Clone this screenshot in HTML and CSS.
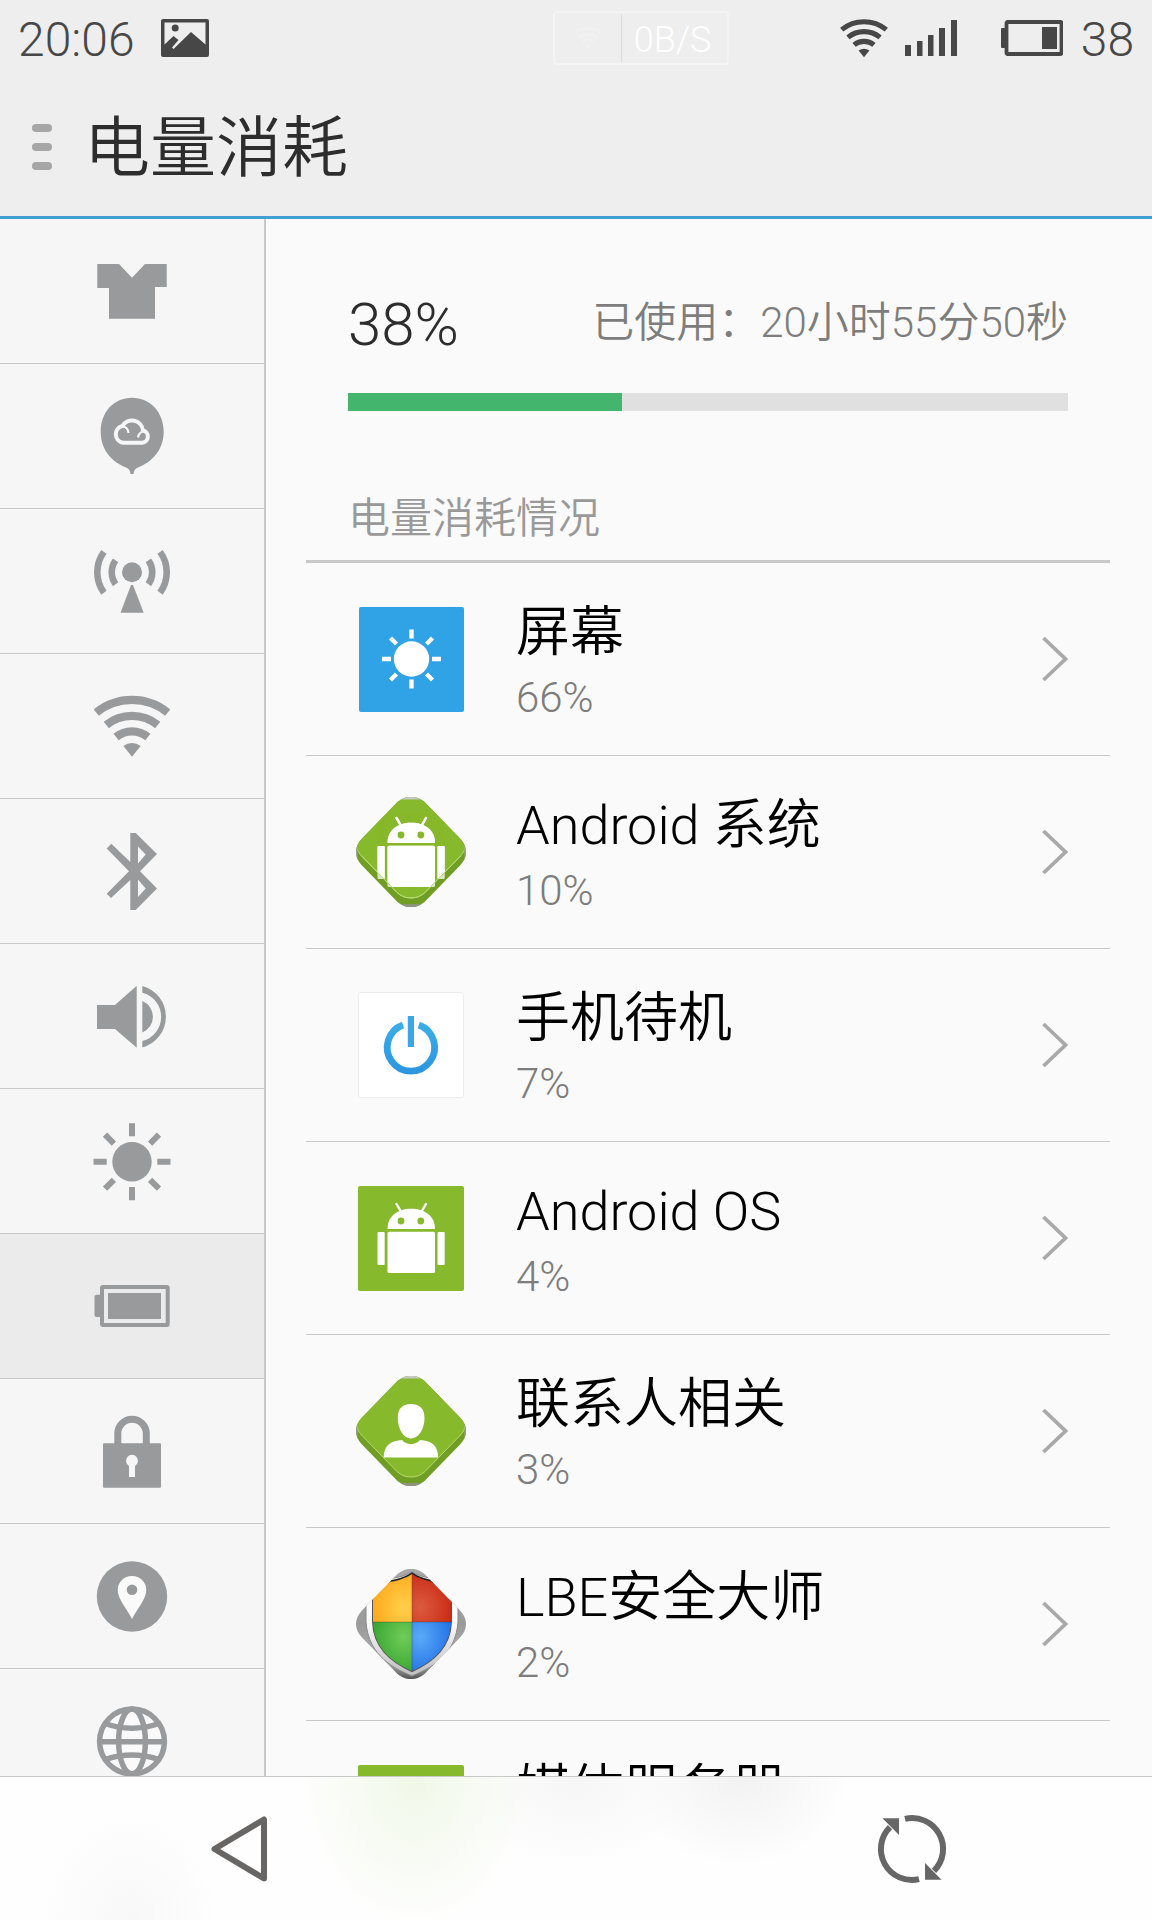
FILE: index.html
```html
<!DOCTYPE html>
<html lang="zh-CN">
<head>
<meta charset="utf-8">
<meta name="viewport" content="width=device-width, initial-scale=1">
<title>电量消耗</title>
<link rel="stylesheet" href="styles.css">
</head>
<body>
<svg class="defs" width="0" height="0" aria-hidden="true">
  <defs>
    <symbol id="wifi" viewBox="0 0 80 80">
      <g fill="none" stroke="currentColor" stroke-width="8.2">
        <path d="M4.3 26.6A56.7 56.7 0 0 1 75.7 26.6"/>
        <path d="M14.3 39A40.8 40.8 0 0 1 65.7 39"/>
        <path d="M24.1 51A25.3 25.3 0 0 1 55.9 51"/>
      </g>
      <path fill="currentColor" d="M31.4 60.1A13.7 13.7 0 0 1 48.6 60.1L40 70.7Z"/>
    </symbol>
    <symbol id="robot" viewBox="0 0 110 110">
      <g fill="#fff">
        <path d="M31.5 46C31.5 33.5 41 25.7 55.2 25.7C69.500 25.700 79 33.500 79 46Z"/>
        <path d="M40.500 21L45.500 29.500M70 21L65 29.500" stroke="#fff" stroke-width="2.400" stroke-linecap="round"/>
        <rect x="31.500" y="48.700" width="47.500" height="41.300" rx="1.500"/>
        <rect x="21.500" y="49" width="7.200" height="33" rx="1"/>
        <rect x="81.500" y="49" width="7.200" height="33" rx="1"/>
      </g>
      <circle cx="45" cy="38" r="3.400" fill="#86b92b"/>
      <circle cx="64.800" cy="38" r="3.400" fill="#86b92b"/>
    </symbol>
    <path id="diamond" d="M55 0C61 0 65 2 69 5.500L104.500 42C108 46 110 50 110 55C110 60 108 64 104.500 68L69 104.500C65 108 61 110 55 110C49 110 45 108 41 104.500L5.500 68C2 64 0 60 0 55C0 50 2 46 5.500 42L41 5.500C45 2 49 0 55 0Z"/>
    <clipPath id="diamond-clip"><use href="#diamond"/></clipPath>
    <clipPath id="face-clip"><use href="#diamond" transform="translate(0 -9)"/></clipPath>
    <symbol id="tile" viewBox="0 0 110 110">
      <g clip-path="url(#diamond-clip)">
        <rect width="110" height="110" fill="#709d24"/>
        <use href="#diamond" transform="translate(0 -9)" fill="#86b92b" stroke="#b5da70" stroke-width="1"/>
        <path d="M0 0H110V2.500H0Z" fill="#c6c9c0"/>
        <path d="M0 107H110V110H0Z" fill="#8c9480"/>
        <path d="M0 48H1.500V70H0ZM108.500 48H110V70H108.500Z" fill="#9a9e94"/>
      </g>
    </symbol>
    <clipPath id="shield-clip"><path d="M56 5C46 12 32 14 17 14V53C18 78 34 92 56 102C78 92 94 78 95 53V14C80 14 66 12 56 5Z"/></clipPath>
    <radialGradient id="yellow" cx=".8" cy=".7" r="1"><stop offset="0" stop-color="#ffd04a"/><stop offset="1" stop-color="#ff9d0f"/></radialGradient>
    <radialGradient id="red" cx=".2" cy=".7" r="1"><stop offset="0" stop-color="#dc5a40"/><stop offset="1" stop-color="#c41d08"/></radialGradient>
    <radialGradient id="green" cx=".8" cy=".3" r="1"><stop offset="0" stop-color="#70cc58"/><stop offset="1" stop-color="#249a24"/></radialGradient>
    <radialGradient id="blue" cx=".2" cy=".3" r="1"><stop offset="0" stop-color="#5aaaf8"/><stop offset="1" stop-color="#1260e0"/></radialGradient>
    <linearGradient id="metal" x1="0" y1="0" x2="0" y2="1"><stop offset="0" stop-color="#a8a8a8"/><stop offset=".5" stop-color="#9a9a9a"/><stop offset=".85" stop-color="#b0b0b0"/><stop offset="1" stop-color="#555"/></linearGradient>
    <linearGradient id="band" x1="0" y1="0" x2="0" y2="1"><stop offset=".5" stop-color="#fafafa"/><stop offset="1" stop-color="#bdbdbd"/></linearGradient>
    <linearGradient id="power" x1="0" y1="0" x2="0" y2="1"><stop offset="0" stop-color="#3aade8"/><stop offset="1" stop-color="#2c96e0"/></linearGradient>
    <symbol id="chevron" viewBox="0 0 26 46">
      <path d="M1.500 2L23.500 23L1.500 44" fill="none" stroke="#a9a9a9" stroke-width="3.800"/>
    </symbol>
  </defs>
</svg>

<header class="header">
  <div class="status">
    <span class="status-text">20:06</span>
    <svg class="picture-icon" viewBox="0 0 48 38" aria-hidden="true">
      <path fill="#474747" fill-rule="evenodd" d="M2 0H46Q48 0 48 2V36Q48 38 46 38H2Q0 38 0 36V2Q0 0 2 0ZM3.500 3.500V25.500L12.500 17L17.500 21L11 28.500L12.500 30L30 13L44.500 25.500V3.500Z"/>
      <circle cx="14.200" cy="9" r="3.500" fill="#474747"/>
    </svg>
    <div class="speed">
      <svg class="speed-icon" aria-hidden="true"><use href="#wifi"/></svg>
      <span class="speed-text">0B/S</span>
    </div>
    <svg class="status-wifi" aria-hidden="true"><use href="#wifi"/></svg>
    <svg class="signal-icon" viewBox="0 0 52 36" aria-hidden="true">
      <path fill="#474747" d="M0 25H6V36H0ZM12 21H17.500V36H12ZM23 15H28.500V36H23ZM34 8H40V36H34ZM46 0H52V36H46Z"/>
    </svg>
    <svg class="battery-icon" viewBox="0 0 62 36" aria-hidden="true">
      <rect x="5.500" y="2" width="55" height="32" rx="1" fill="none" stroke="#474747" stroke-width="3.800"/>
      <rect x="0" y="8" width="5" height="20" rx="1" fill="#474747"/>
      <rect x="41" y="7" width="15" height="22" fill="#474747"/>
    </svg>
    <span class="status-text">38</span>
  </div>
  <div class="titlebar">
    <button class="menu-button" type="button" aria-label="菜单"><i></i><i></i><i></i></button>
    <h1 class="title">电量消耗</h1>
  </div>
</header>

<div class="content">
  <nav class="sidebar" aria-label="设置">
    <a class="side-item" href="#theme" aria-label="主题"><svg viewBox="0 0 80 80"><path d="M5.300 13H27L40 26.700L53 13H74.700V36H63V67.700H17V37H5.300Z"/></svg></a>
    <a class="side-item" href="#cloud" aria-label="云服务"><svg viewBox="0 0 80 80">
      <path d="M40 1.700C58 1.700 71.700 16 71.700 35.700C71.700 54 60 66 45 72C42.500 73 42 75 41.500 78H38.500C38 75 37.500 73 35 72C20 66 8.700 54 8.700 35.700C8.700 16 22 1.700 40 1.700Z"/>
      <g fill="none" stroke="#f6f6f6" stroke-width="4">
        <path d="M31 46.700H50.500A6.200 6.200 0 0 0 51 34.500A11 11 0 0 0 30.500 30A8.500 8.500 0 0 0 31 46.700Z"/>
        <path d="M30 30Q36 31 36.500 37M52 35Q47 36 46 41.500" stroke-width="2.200"/>
      </g></svg></a>
    <a class="side-item" href="#mobile" aria-label="移动网络"><svg viewBox="0 0 80 80">
      <circle cx="40" cy="31.300" r="10"/><path d="M39 44H41L51.700 71.700H28.500Z"/>
      <g fill="none" stroke="#989a9b" stroke-width="6.600"><path d="M23.600 19.400A20.300 20.300 0 0 0 23.600 43.200M56.400 19.400A20.300 20.300 0 0 1 56.400 43.200M11.900 10.900A34.700 34.700 0 0 0 11.900 51.700M68.100 10.900A34.700 34.700 0 0 1 68.100 51.700"/></g></svg></a>
    <a class="side-item" href="#wlan" aria-label="WLAN"><svg viewBox="0 0 80 80"><use href="#wifi"/></svg></a>
    <a class="side-item" href="#bluetooth" aria-label="蓝牙"><svg viewBox="0 0 80 80"><path fill-rule="evenodd" d="M38.300 2H43.700L65 23L48 40.200L65 57.500L43.700 79H38.300V49L19 67L14.700 62.700L37 40.300L14.700 17.500L19.300 12.700L38.300 31ZM46 15.500V32.500L53.700 23.500ZM46 48.500V66L53.700 57.500Z"/></svg></a>
    <a class="side-item" href="#sound" aria-label="声音"><svg viewBox="0 0 80 80"><path d="M5 29H23L44.700 9.700V71.700L23 53H5ZM50.300 25A17 17 0 0 1 50.300 56.500ZM50.300 9.900A31.900 31.900 0 0 1 50.300 71.500V65A24.900 24.900 0 0 0 50.300 16.700Z"/></svg></a>
    <a class="side-item" href="#display" aria-label="显示"><svg viewBox="0 0 80 80">
      <circle cx="40" cy="40.700" r="19.700"/>
      <path fill="none" stroke="#989a9b" stroke-width="6" d="M40 2.200V15.300M40 66V79.200M1.500 40.700H14.700M65.300 40.700H78.500M13 13.700L21.900 22.600M58.100 58.800L67 67.700M67 13.700L58.100 22.600M21.900 58.800L13 67.700"/></svg></a>
    <a class="side-item is-active" href="#battery" aria-label="电量" aria-current="page"><svg viewBox="0 0 80 80">
      <rect x="10" y="21" width="65.700" height="38" rx="1" fill="none" stroke="#989a9b" stroke-width="4"/>
      <rect x="16" y="27" width="53" height="26"/><path d="M8 28.700H4.500Q2.500 28.700 2.500 30.700V49Q2.500 51 4.500 51H8Z"/></svg></a>
    <a class="side-item" href="#lock" aria-label="安全"><svg viewBox="0 0 80 80">
      <path fill-rule="evenodd" d="M12 32.300H68Q69 32.300 69 33.300V75.700Q69 76.700 68 76.700H12Q11 76.700 11 75.700V33.300Q11 32.300 12 32.300ZM37 55V66H43V55A6 6 0 1 0 37 55Z"/>
      <path d="M25.800 33V22.500A14.250 14.250 0 0 1 54.300 22.500V33" fill="none" stroke="#989a9b" stroke-width="7"/></svg></a>
    <a class="side-item" href="#location" aria-label="位置"><svg viewBox="0 0 80 80">
      <circle cx="40" cy="40.500" r="35.200"/><path fill="#fafafa" d="M40 20A14.200 14.200 0 0 1 54.300 34.200C54.300 43 45 53 40 63C35 53 25.700 43 25.700 34.200A14.200 14.200 0 0 1 40 20Z"/><circle cx="40" cy="33.700" r="5.300"/></svg></a>
    <a class="side-item" href="#language" aria-label="语言"><svg viewBox="0 0 80 80">
      <g fill="none" stroke="#989a9b" stroke-width="5.500"><circle cx="40" cy="40.500" r="32.400" fill="#fafafa"/><ellipse cx="40" cy="40.500" rx="13.400" ry="32.400"/><path d="M8 40.700H72M13 22.500Q40 32 67 22.500M13 58.500Q40 49.500 67 58.500"/></g></svg></a>
  </nav>

  <main class="main">
    <section class="summary">
      <div class="summary-line">
        <strong class="percent">38%</strong>
        <span class="used">已使用：20小时55分50秒</span>
      </div>
      <progress class="bar" value="38" max="100" aria-label="电量"></progress>
      <h2 class="section-title">电量消耗情况</h2>
    </section>
    <ul class="apps">
      <li><a class="app" href="#screen">
        <svg class="app-icon" viewBox="0 0 110 110" aria-hidden="true"><rect x="3" y="3" width="105" height="105" rx="2" fill="#30a2e6"/><circle cx="55.500" cy="55" r="17.700" fill="#fff"/>
          <path stroke="#fff" stroke-width="4.400" d="M55.500 25.500V34.500M55.500 75.500V84.500M26 55H35M76 55H85M34.500 34L40.500 40M70.500 70L76.500 76M76.500 34L70.500 40M40.500 70L34.500 76"/></svg>
        <span class="app-text"><span class="app-name">屏幕</span><span class="app-share">66%</span></span>
        <svg class="chevron" aria-hidden="true"><use href="#chevron"/></svg></a></li>
      <li><a class="app" href="#android-system">
        <svg class="app-icon" viewBox="0 0 110 110" aria-hidden="true"><use href="#tile"/><g clip-path="url(#diamond-clip)"><use href="#robot" opacity=".75"/></g><g clip-path="url(#face-clip)"><use href="#robot"/></g><path d="M6 59L41 95.500C45 99 49 101 55 101C61 101 65 99 69 95.500L104.500 59" fill="none" stroke="#b5da70" stroke-width="1"/></svg>
        <span class="app-text"><span class="app-name">Android 系统</span><span class="app-share">10%</span></span>
        <svg class="chevron" aria-hidden="true"><use href="#chevron"/></svg></a></li>
      <li><a class="app" href="#standby">
        <svg class="app-icon" viewBox="0 0 110 110" aria-hidden="true"><rect x="2.500" y="2.500" width="105" height="105" rx="2" fill="#fff" stroke="#ededed"/><path fill="none" stroke="url(#power)" stroke-width="6.800" d="M47 35A23.700 23.700 0 1 0 62.800 35"/><rect x="51.800" y="26" width="6.200" height="31" fill="#3aa6e6"/></svg>
        <span class="app-text"><span class="app-name">手机待机</span><span class="app-share">7%</span></span>
        <svg class="chevron" aria-hidden="true"><use href="#chevron"/></svg></a></li>
      <li><a class="app" href="#android-os">
        <svg class="app-icon" viewBox="0 0 110 110" aria-hidden="true"><rect x="2" y="3" width="106" height="105" rx="2" fill="#86b92b"/><use href="#robot"/></svg>
        <span class="app-text"><span class="app-name">Android OS</span><span class="app-share">4%</span></span>
        <svg class="chevron" aria-hidden="true"><use href="#chevron"/></svg></a></li>
      <li><a class="app" href="#contacts">
        <svg class="app-icon" viewBox="0 0 110 110" aria-hidden="true"><use href="#tile"/><path fill="#fff" d="M55 28C64 28 68.500 33 68.500 42C68.500 54 62 62.500 55 62.500C48 62.500 41.800 54 41.800 42C41.800 33 46 28 55 28ZM27.600 81.500C28 69 35 64.500 46 64C50 69.500 60 69.500 64 64C75 64.500 82 69 82.200 81.500Z"/></svg>
        <span class="app-text"><span class="app-name">联系人相关</span><span class="app-share">3%</span></span>
        <svg class="chevron" aria-hidden="true"><use href="#chevron"/></svg></a></li>
      <li><a class="app" href="#lbe">
        <svg class="app-icon" viewBox="0 0 110 110" aria-hidden="true"><g clip-path="url(#diamond-clip)">
          <rect width="110" height="110" fill="url(#metal)"/>
          <path d="M56 3C46 9 30 11 10 11V53C12 82 31 97 56 107C81 97 100 82 102 53V11C82 11 66 9 56 3Z" fill="url(#band)" stroke="#888"/>
          <path d="M9 13L17 14C32 14 46 12 56 5C66 12 80 14 95 14L103 13" fill="none" stroke="#222" stroke-width="3"/>
          <path d="M17 14V53C18 78 34 92 56 102C78 92 94 78 95 53V14" fill="none" stroke="#555" stroke-width="2"/>
          <g clip-path="url(#shield-clip)"><rect x="14" y="4" width="42" height="49" fill="url(#yellow)"/><rect x="56" y="4" width="42" height="49" fill="url(#red)"/><rect x="14" y="53" width="42" height="50" fill="url(#green)"/><rect x="56" y="53" width="42" height="50" fill="url(#blue)"/></g>
          <path d="M56 5V102M17 53H95" stroke="#333" stroke-opacity=".35"/></g></svg>
        <span class="app-text"><span class="app-name">LBE安全大师</span><span class="app-share">2%</span></span>
        <svg class="chevron" aria-hidden="true"><use href="#chevron"/></svg></a></li>
      <li><a class="app" href="#media">
        <svg class="app-icon" viewBox="0 0 110 110" aria-hidden="true"><rect x="2" y="3" width="106" height="105" rx="2" fill="#86b92b"/><use href="#robot"/></svg>
        <span class="app-text"><span class="app-name">媒体服务器</span></span>
        <svg class="chevron" aria-hidden="true"><use href="#chevron"/></svg></a></li>
    </ul>
  </main>
</div>

<footer class="navbar">
  <button class="nav-button" type="button" aria-label="返回"><svg viewBox="0 0 72 72"><path d="M60 6.500V65.500L10.500 36Z" fill="none" stroke="#676664" stroke-width="6" stroke-linejoin="round"/></svg></button>
  <button class="nav-button" type="button" aria-label="刷新"><svg viewBox="0 0 72 72">
    <path d="M29 5.800A31 31 0 0 1 58 57.900M43 66.200A31 31 0 0 1 14 14.100" fill="none" stroke="#666" stroke-width="6"/>
    <path d="M49 50L65.500 66.700H49ZM23 22L6.500 5.300H23Z" fill="#666"/></svg></button>
</footer>
</body>
</html>
```

FILE: styles.css
```css
* {
  box-sizing: border-box;
}

body {
  margin: 0;
  height: 100vh;
  display: flex;
  flex-direction: column;
  overflow: hidden;
  background: #fafafa;
  color: #000;
  font-family: Roboto, "Noto Sans CJK SC DemiLight", "Noto Sans CJK SC", sans-serif;
  font-weight: 350;
}

a {
  color: inherit;
  text-decoration: none;
}

button {
  padding: 0;
  border: 0;
  background: none;
}

svg {
  display: block;
  flex: none;
}

.defs {
  position: absolute;
}

/* Status bar and title */
.header {
  flex: none;
  background: #eee;
  border-bottom: 3px solid #429fd3;
}

.status {
  display: flex;
  align-items: center;
  height: 76px;
  padding: 0 18px;
  color: #474747;
}

.status-text {
  padding-top: 4px;
  font-size: 48px;
  line-height: 72px;
}

.picture-icon {
  width: 48px;
  height: 38px;
  margin-left: 26px;
}

.speed {
  display: flex;
  align-items: center;
  width: 176px;
  height: 54px;
  margin-left: auto;
  border: 2px solid #f4f4f4;
  border-radius: 4px;
  color: #fff;
}

.speed-icon {
  width: 30px;
  height: 36px;
  margin: 0 18px;
  color: #f0f0f0;
}

.speed-text {
  padding: 4px 0 0 12px;
  border-left: 1px solid #dcdcdc;
  font-size: 36px;
  line-height: 44px;
}

.status-wifi {
  width: 50px;
  height: 50px;
  margin-left: 110px;
}

.signal-icon {
  width: 52px;
  height: 36px;
  margin-left: 16px;
}

.battery-icon {
  width: 62px;
  height: 36px;
  margin: 0 18px 0 44px;
}

.titlebar {
  display: flex;
  align-items: center;
  height: 140px;
  padding: 2px 32px 0;
}

.menu-button {
  display: flex;
  flex-direction: column;
  gap: 11px;
}

.menu-button i {
  width: 20px;
  height: 8px;
  border-radius: 4px;
  background: #a6a6a6;
}

.title {
  margin: 0 0 0 32px;
  padding-top: 4px;
  color: #2d2d2d;
  font-size: 66px;
  font-weight: inherit;
  line-height: 96px;
}

/* Two columns */
.content {
  flex: 1;
  min-height: 0;
  display: flex;
  overflow: hidden;
}

.sidebar {
  flex: none;
  width: 266px;
  border-right: 2px solid #c8c8c8;
  background: #f6f6f6;
}

.side-item {
  display: flex;
  align-items: center;
  justify-content: center;
  height: 145px;
  border-bottom: 1px solid #c8c8c8;
  color: #989a9b;
  fill: #989a9b;
}

.side-item.is-active {
  background: #ebebeb;
}

.side-item svg {
  width: 80px;
  height: 80px;
}

.main {
  flex: 1;
  min-width: 0;
  padding: 0 42px 0 40px;
}

/* Battery level */
.summary {
  padding: 64px 42px 11px;
  border-bottom: 3px solid #c8c8c8;
}

.summary-line {
  display: flex;
  justify-content: space-between;
}

.percent {
  color: #2d2d2d;
  font-size: 60px;
  font-weight: inherit;
  line-height: 84px;
}

.used {
  color: #7d7d7d;
  font-size: 42px;
  line-height: 80px;
}

.bar {
  display: block;
  width: 100%;
  height: 18px;
  margin-top: 26px;
  border: 0;
  background: #e0e0e0;
  appearance: none;
}

.bar::-webkit-progress-bar {
  background: #e0e0e0;
}

.bar::-webkit-progress-value {
  background: #43b56c;
}

.section-title {
  margin: 78px 0 0;
  color: #999;
  font-size: 42px;
  font-weight: inherit;
  line-height: 60px;
}

/* Consumers */
.apps {
  margin: 0;
  padding: 0;
  list-style: none;
}

.app {
  display: flex;
  align-items: center;
  height: 193px;
  padding: 0 42px 0 50px;
  border-bottom: 1px solid #c8c8c8;
}

.app-icon {
  width: 110px;
  height: 110px;
}

.app-text {
  flex: 1;
  display: flex;
  flex-direction: column;
  min-height: 134px;
  margin-left: 50px;
  padding-top: 2px;
}

.app-name {
  font-size: 54px;
  line-height: 78px;
}

.app-share {
  color: #7d7d7d;
  font-size: 42px;
  line-height: 52px;
}

.chevron {
  width: 26px;
  height: 46px;
}

.navbar {
  flex: none;
  display: flex;
  align-items: center;
  justify-content: space-between;
  height: 144px;
  padding: 0 204px;
  border-top: 1px solid #c8c8c8;
  background:
    radial-gradient(ellipse 115px 150px at 415px 0, #f0f8e8, #f0f8e800),
    radial-gradient(ellipse 120px 90px at 575px 0, #f6f6f6, #f6f6f600),
    radial-gradient(ellipse 110px 90px at 740px 0, #f2f2f2, #f2f2f200),
    radial-gradient(ellipse 90px 110px at 130px 100%, #f8f8f8, #f8f8f800),
    #fefefe;
}

.nav-button svg {
  width: 72px;
  height: 72px;
}
```
